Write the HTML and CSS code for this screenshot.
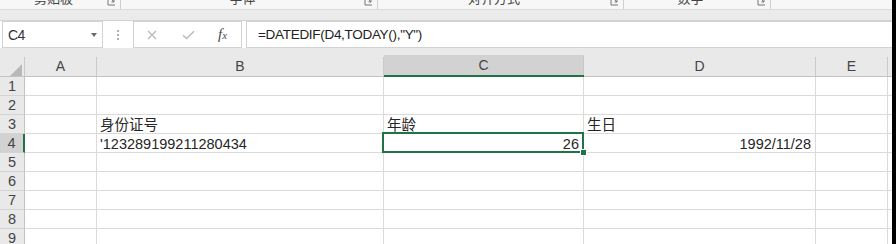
FILE: index.html
```html
<!DOCTYPE html>
<html lang="zh-CN">
<head>
<meta charset="utf-8">
<title>Excel</title>
<link rel="stylesheet" href="styles.css">
</head>
<body>
<div class="app">
  <div class="ribbon-labels">
    <div class="grp g1"><span class="lbl">剪贴板</span><span class="launch"><svg width="10" height="9" viewBox="0 0 10 9"><path d="M1 0V8H8" fill="none" stroke="#777" stroke-width="1"/><path d="M3.5 1.5L7 5M7 2.5V5H4.5" fill="none" stroke="#777" stroke-width="1"/></svg></span></div>
    <div class="grp g2"><span class="lbl">字体</span><span class="launch"><svg width="10" height="9" viewBox="0 0 10 9"><path d="M1 0V8H8" fill="none" stroke="#777" stroke-width="1"/><path d="M3.5 1.5L7 5M7 2.5V5H4.5" fill="none" stroke="#777" stroke-width="1"/></svg></span></div>
    <div class="grp g3"><span class="lbl">对齐方式</span><span class="launch"><svg width="10" height="9" viewBox="0 0 10 9"><path d="M1 0V8H8" fill="none" stroke="#777" stroke-width="1"/><path d="M3.5 1.5L7 5M7 2.5V5H4.5" fill="none" stroke="#777" stroke-width="1"/></svg></span></div>
    <div class="grp g4"><span class="lbl">数字</span><span class="launch"><svg width="10" height="9" viewBox="0 0 10 9"><path d="M1 0V8H8" fill="none" stroke="#777" stroke-width="1"/><path d="M3.5 1.5L7 5M7 2.5V5H4.5" fill="none" stroke="#777" stroke-width="1"/></svg></span></div>
  </div>
  <div class="ribbon-band"></div>
  <div class="fbar">
    <div class="namebox"><span>C4</span><span class="caret"></span></div>
    <div class="dots"><i></i><i></i><i></i></div>
    <div class="fxbox">
      <svg class="ico-x" width="10" height="10" viewBox="0 0 10 10"><path d="M1 1L9 9M9 1L1 9" fill="none" stroke="#b9b9b9" stroke-width="1.3"/></svg>
      <svg class="ico-ok" width="13" height="10" viewBox="0 0 13 10"><path d="M1 5.2L4.6 8.6L12 1.2" fill="none" stroke="#b9b9b9" stroke-width="1.4"/></svg>
      <span class="fx">f<span class="fxs">x</span></span>
    </div>
    <div class="formula">=DATEDIF(D4,TODAY(),"Y")</div>
  </div>
  <div class="sheet">
    <div class="ch corner"><div class="chi"><svg width="12" height="12" viewBox="0 0 12 12"><polygon points="12,0 12,12 0,12" fill="#b8b8b8"/></svg></div></div>
    <div class="ch"><div class="chi">A</div></div>
    <div class="ch"><div class="chi">B</div></div>
    <div class="ch sel"><div class="chi">C</div></div>
    <div class="ch"><div class="chi">D</div></div>
    <div class="ch"><div class="chi">E</div></div>
    <div class="ch last"></div>

    <div class="rh">1</div><div class="c"></div><div class="c"></div><div class="c"></div><div class="c"></div><div class="c"></div><div class="c last"></div>
    <div class="rh">2</div><div class="c"></div><div class="c"></div><div class="c"></div><div class="c"></div><div class="c"></div><div class="c last"></div>
    <div class="rh">3</div><div class="c"></div><div class="c">身份证号</div><div class="c">年龄</div><div class="c">生日</div><div class="c"></div><div class="c last"></div>
    <div class="rh sel">4</div><div class="c"></div><div class="c">'123289199211280434</div><div class="c r active">26<span class="selbox"></span><span class="handle"></span></div><div class="c r">1992/11/28</div><div class="c"></div><div class="c last"></div>
    <div class="rh">5</div><div class="c"></div><div class="c"></div><div class="c"></div><div class="c"></div><div class="c"></div><div class="c last"></div>
    <div class="rh">6</div><div class="c"></div><div class="c"></div><div class="c"></div><div class="c"></div><div class="c"></div><div class="c last"></div>
    <div class="rh">7</div><div class="c"></div><div class="c"></div><div class="c"></div><div class="c"></div><div class="c"></div><div class="c last"></div>
    <div class="rh">8</div><div class="c"></div><div class="c"></div><div class="c"></div><div class="c"></div><div class="c"></div><div class="c last"></div>
    <div class="rh">9</div><div class="c"></div><div class="c"></div><div class="c"></div><div class="c"></div><div class="c"></div><div class="c last"></div>
  </div>
</div>
</body>
</html>
```

FILE: styles.css
```css
* { box-sizing: border-box; }
html, body { margin: 0; padding: 0; background: #fff; }
body { font-family: "Liberation Sans", "Noto Sans CJK SC", sans-serif; color: #262626; }

.app {
  width: 896px;
  height: 244px;
  overflow: hidden;
  border-right: 4px solid #000;
  background: #fff;
}

/* ribbon group labels (cut off at top) */
.ribbon-labels {
  display: flex;
  height: 10px;
  background: #f7f7f7;
  border-bottom: 1px solid #dadada;
  overflow: hidden;
}
.grp {
  display: flex;
  height: 9px;
  border-right: 1px solid #cfcfcf;
}
.g1 { width: 121px; }
.g2 { width: 257px; }
.g3 { width: 246px; }
.g4 { width: 147px; }
.lbl {
  flex: 1;
  text-align: center;
  font-family: "Noto Sans CJK SC", sans-serif;
  font-size: 13px;
  line-height: 13px;
  margin-top: -9px;
  color: #444;
}
.launch {
  width: 11px;
  margin-right: 2px;
  margin-top: -3px;
}
.launch svg { display: block; }

.ribbon-band {
  height: 11px;
  background: #ebebeb;
  border-bottom: 1px solid #d3d3d3;
}

/* formula bar */
.fbar {
  display: flex;
  height: 27px;
  background: #fff;
}
.namebox {
  width: 101px;
  margin-left: 2px;
  border: 1px solid #d2d2d2;
  display: flex;
  align-items: center;
  justify-content: space-between;
  padding: 0 5px 0 5px;
  font-size: 14px;
  letter-spacing: -0.5px;
  color: #333;
}
.caret {
  width: 0;
  height: 0;
  border-left: 3.5px solid transparent;
  border-right: 3.5px solid transparent;
  border-top: 4px solid #6a6a6a;
}
.dots {
  width: 30px;
  display: flex;
  flex-direction: column;
  align-items: center;
  justify-content: center;
  gap: 2px;
}
.dots i {
  display: block;
  width: 2px;
  height: 2px;
  background: #b0b0b0;
}
.fxbox {
  width: 109px;
  border: 1px solid #d2d2d2;
  display: flex;
  align-items: center;
  padding-left: 13px;
}
.ico-x { margin-right: 25px; }
.ico-ok { margin-right: 23px; }
.fx {
  font-family: "Liberation Serif", serif;
  font-style: italic;
  font-size: 15px;
  color: #4a4a4a;
  line-height: 1;
}
.fxs { font-size: 11px; }
.formula {
  flex: 1;
  margin-left: 4px;
  border: 1px solid #d2d2d2;
  border-right: none;
  display: flex;
  align-items: center;
  padding-left: 11px;
  font-size: 13.5px;
  letter-spacing: -0.3px;
  color: #222;
}

/* sheet grid */
.sheet {
  display: grid;
  grid-template-columns: 25px 72px 287px 200px 232px 72px 4px;
  grid-template-rows: 29px repeat(9, 19px);
  background: #fff;
}
.ch {
  background: #e9e9e9;
  border-bottom: 1px solid #c3c3c3;
  display: flex;
  align-items: flex-end;
}
.chi {
  width: 100%;
  height: 19px;
  border-right: 1px solid #c9c9c9;
  text-align: center;
  font-size: 14px;
  line-height: 19px;
  color: #444;
}
.ch.sel { border-bottom: 2px solid #217346; }
.ch.sel .chi { background: #d2d2d2; height: 20px; line-height: 21px; }
.corner .chi {
  display: flex;
  justify-content: flex-end;
  align-items: flex-end;
  padding: 0 2px 0 0;
}
.corner svg { display: block; }
.ch.last .chi, .ch.last { border-right: none; }

.rh {
  background: #e9e9e9;
  border-right: 1px solid #c3c3c3;
  border-bottom: 1px solid #d4d4d4;
  text-align: center;
  font-size: 14.5px;
  line-height: 15px;
  padding-top: 2px;
  color: #444;
}
.rh.sel {
  background: #d2d2d2;
  border-right: 2px solid #217346;
}

.c {
  position: relative;
  border-right: 1px solid #dadada;
  border-bottom: 1px solid #dadada;
  display: flex;
  align-items: flex-end;
  padding: 0 3px;
  font-size: 14.5px;
  line-height: 15px;
  white-space: nowrap;
  color: #262626;
}
.c.r { justify-content: flex-end; padding-right: 4px; }
.c.last { border-right: none; }
.c.active { z-index: 2; }

.selbox {
  position: absolute;
  top: -2px;
  left: -2px;
  right: -1px;
  bottom: -1px;
  border: 2px solid #217346;
  pointer-events: none;
}
.handle {
  position: absolute;
  right: -4px;
  bottom: -4px;
  width: 7px;
  height: 7px;
  background: #217346;
  border: 1px solid #fff;
}
```
